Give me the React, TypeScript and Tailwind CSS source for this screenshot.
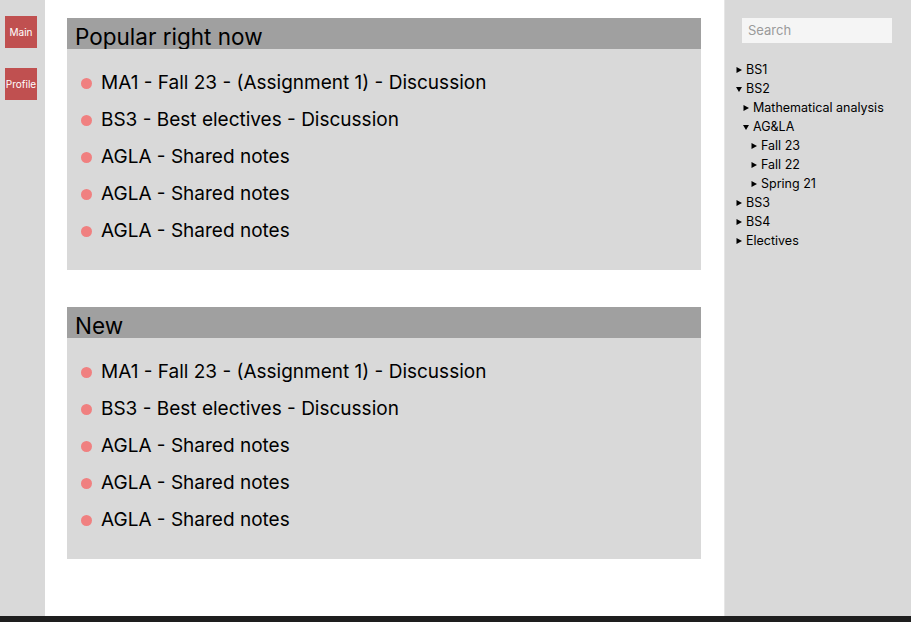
import React from "react";

const items = [
  "MA1 - Fall 23 - (Assignment 1) - Discussion",
  "BS3 - Best electives - Discussion",
  "AGLA - Shared notes",
  "AGLA - Shared notes",
  "AGLA - Shared notes",
];

function Card({ title }: { title: string }) {
  return (
    <section className="w-[634px] bg-[#d9d9d9]">
      <div className="h-[31px] bg-[#a0a0a0] pl-[8px] text-[22.5px] leading-[38px] text-black overflow-hidden">
        {title}
      </div>
      <ul className="pt-[16px] pb-[20px]">
        {items.map((t, i) => (
          <li key={i} className="flex items-center h-[37px] pl-[14px] text-[19px] text-black">
            <span className="w-[11px] h-[11px] rounded-full bg-[#f08080] mr-[9px] shrink-0" />
            <span>{t}</span>
          </li>
        ))}
      </ul>
    </section>
  );
}

type Node = { label: string; open?: boolean; children?: Node[] };

const tree: Node[] = [
  { label: "BS1" },
  {
    label: "BS2",
    open: true,
    children: [
      { label: "Mathematical analysis" },
      {
        label: "AG&LA",
        open: true,
        children: [{ label: "Fall 23" }, { label: "Fall 22" }, { label: "Spring 21" }],
      },
    ],
  },
  { label: "BS3" },
  { label: "BS4" },
  { label: "Electives" },
];

function Arrow({ open }: { open?: boolean }) {
  return (
    <svg width="6" height="6" viewBox="0 0 6 6" className="shrink-0 mr-[4px]">
      {open ? <polygon points="0,1 6,1 3,6" fill="#000" /> : <polygon points="0.5,0 6,3 0.5,6" fill="#000" />}
    </svg>
  );
}

function TreeNode({ node, depth }: { node: Node; depth: number }) {
  return (
    <div>
      <div className="flex items-center h-[19px] text-[12.5px] text-black">
        <Arrow open={node.open} />
        <span>{node.label}</span>
      </div>
      {node.open && node.children && (
        <div className={depth === 0 ? "pl-[7px]" : "pl-[8px]"}>
          {node.children.map((c, i) => (
            <TreeNode key={i} node={c} depth={depth + 1} />
          ))}
        </div>
      )}
    </div>
  );
}

export default function App() {
  return (
    <div className="w-[911px] h-[622px] flex flex-col font-['Inter',sans-serif]">
      <div className="flex h-[616px]">
        <aside className="w-[45px] bg-[#d9d9d9] flex flex-col items-start pl-[5px] pt-[16px] gap-[20px]">
          <button className="w-[32px] h-[32px] bg-[#c05050] text-white text-[10px] flex items-center justify-center">
            Main
          </button>
          <button className="w-[32px] h-[32px] bg-[#c05050] text-white text-[10px] flex items-center justify-center">
            Profile
          </button>
        </aside>
        <main className="w-[679px] bg-white pl-[22px] pt-[18px] flex flex-col gap-[37px]">
          <Card title="Popular right now" />
          <Card title="New" />
        </main>
        <aside className="flex-1 bg-[#d9d9d9] border-l border-[#e6e6e6]">
          <div className="pl-[17px] pt-[17px]">
            <input
              placeholder="Search"
              className="w-[150px] h-[25px] bg-[#f5f5f5] px-[6px] text-[13px] placeholder-[#9a9a9a] outline-none"
            />
          </div>
          <div className="pl-[11px] pt-[18px]">
            {tree.map((n, i) => (
              <TreeNode key={i} node={n} depth={0} />
            ))}
          </div>
        </aside>
      </div>
      <div className="h-[6px] bg-[#1e1e1e]" />
    </div>
  );
}
